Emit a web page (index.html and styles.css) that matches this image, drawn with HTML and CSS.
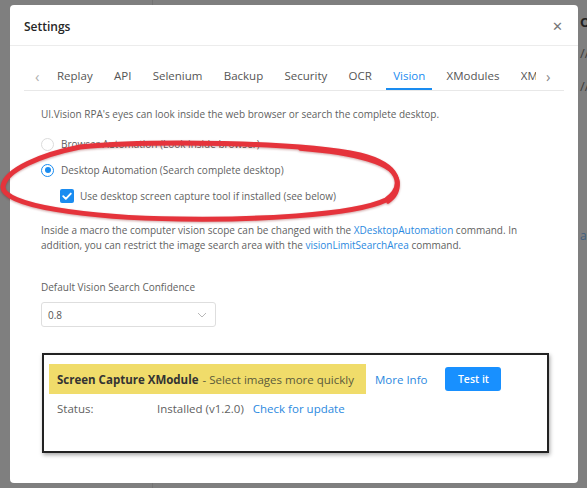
FILE: index.html
```html
<!DOCTYPE html>
<html lang="en">
<head>
<meta charset="utf-8">
<title>Settings</title>
<link rel="stylesheet" href="styles.css">
</head>
<body>
<div class="page">
  <aside class="page-side"></aside>
  <main class="page-main">
    <div class="page-title">Op</div>
    <div class="page-line">//</div>
    <div class="page-line">//</div>
    <div class="page-link">ar</div>
  </main>
</div>

<div class="modal">
  <header class="modal-head">
    <span class="modal-title">Settings</span>
    <span class="modal-close">&#x2715;</span>
  </header>
  <div class="modal-body">
    <nav class="tabs">
      <span class="tab-arrow">&#x2039;</span>
      <span class="tab">Replay</span>
      <span class="tab">API</span>
      <span class="tab">Selenium</span>
      <span class="tab">Backup</span>
      <span class="tab">Security</span>
      <span class="tab">OCR</span>
      <span class="tab active">Vision</span>
      <span class="tab">XModules</span>
      <span class="tab tab-cut">XM</span>
      <span class="tab-arrow tab-next">&#x203A;</span>
    </nav>

    <section class="pane">
      <p class="intro">UI.Vision RPA's eyes can look inside the web browser or search the complete desktop.</p>

      <label class="option"><span class="radio"></span>Browser Automation (Look inside browser)</label>
      <label class="option"><span class="radio checked"></span>Desktop Automation (Search complete desktop)</label>
      <label class="option sub"><span class="checkbox"><svg viewBox="0 0 14 14" width="14" height="14"><path d="M3.2 7.2l2.6 2.6 5-5.2" fill="none" stroke="#fff" stroke-width="1.9" stroke-linecap="round" stroke-linejoin="round"/></svg></span>Use desktop screen capture tool if installed (see below)</label>

      <p class="note">Inside a macro the computer vision scope can be changed with the <a>XDesktopAutomation</a> command. In addition, you can restrict the image search area with the <a>visionLimitSearchArea</a> command.</p>

      <div class="field-label">Default Vision Search Confidence</div>
      <div class="select"><span>0.8</span><svg viewBox="0 0 10 6" width="10" height="6"><path d="M1 1l4 4 4-4" fill="none" stroke="#b8b8b8" stroke-width="1"/></svg></div>

      <div class="xmodule">
        <div class="xm-row">
          <span class="xm-name"><b>Screen Capture XModule</b> - Select images more quickly</span>
          <a class="xm-info">More Info</a>
          <button class="xm-test">Test it</button>
        </div>
        <div class="xm-status">
          <span class="xm-key">Status:</span>
          <span class="xm-val">Installed (v1.2.0)</span>
          <a>Check for update</a>
        </div>
      </div>
    </section>
  </div>

  <svg class="annotation" width="420" height="240" viewBox="0 0 420 240">
    <path d="M80 147 C 150 140, 300 142, 360 155 C 400 165, 406 186, 386 200 C 352 216, 250 220, 180 219 C 90 218, 0 206, 3 186 C 6 170, 40 155, 80 147 Z" fill="none" stroke="#e5333b" stroke-width="5" stroke-linejoin="round"/>
    <path d="M300 149 C 352 153, 396 163, 398 182 C 399 192, 394 198, 388 202" fill="none" stroke="#e5333b" stroke-width="3.5" stroke-linecap="round"/>
  </svg>
</div>
</body>
</html>
```
FILE: styles.css
```css
* { box-sizing: border-box; }

html, body {
  margin: 0;
  height: 100%;
  overflow: hidden;
}

body {
  background: #7f7f7f;
  font-family: "Open Sans", "Noto Sans", sans-serif;
  position: relative;
}

/* dimmed application page behind the dialog */
.page {
  display: flex;
  height: 100%;
}

.page-side {
  width: 153px;
  flex: none;
  border-right: 1px solid #737373;
}

.page-main {
  flex: 1;
  padding: 13px 0 0 427px;
  color: #333;
  font-size: 13px;
  line-height: 18px;
  white-space: nowrap;
}

.page-title { font-weight: 700; color: #222; }
.page-line { margin-top: 13px; color: #3a3a3a; }
.page-line + .page-line { margin-top: 15px; }
.page-link { margin-top: 132px; color: #3f5f7f; font-size: 12px; }

/* dialog */
.modal {
  position: absolute;
  left: 10px;
  top: 5px;
  width: 568px;
  height: 478px;
  background: #fff;
  border-radius: 4px;
}

.modal-head {
  height: 41px;
  padding: 2px 14px 0;
  display: flex;
  align-items: center;
  justify-content: space-between;
  border-bottom: 1px solid #ececec;
}

.modal-title {
  font-size: 12px;
  font-weight: 600;
  color: #262626;
}

.modal-close {
  font-size: 13px;
  color: #777;
  margin-right: 1px;
  font-family: "DejaVu Sans", sans-serif;
}

.modal-body {
  padding: 15px 14px 0;
}

.tabs {
  display: flex;
  align-items: flex-end;
  height: 30px;
  border-bottom: 1px solid #e8e8e8;
  font-size: 11.5px;
  color: #555;
  white-space: nowrap;
}

.tab-arrow {
  width: 33px;
  padding: 0 0 7px 11px;
  color: #b0b0b0;
  font-size: 15px;
  line-height: 14px;
}

.tab-next {
  width: 28px;
  margin-left: auto;
  padding-left: 10px;
  color: #888;
}

.tab {
  padding: 0 0 6px;
  margin-right: 21.3px;
  line-height: 16px;
}

.tab.active {
  color: #1a8cf0;
  border-bottom: 2px solid #1a8cf0;
  padding: 0 7px 4px;
  margin: 0 14.3px 0 -7px;
}

.tab-cut {
  width: 15px;
  overflow: hidden;
  margin-right: 0;
}

.pane {
  padding: 16px 0 0 17px;
  font-size: 10px;
  color: #5f5f5f;
}

.intro { margin: 0 0 16px; line-height: 14px; }

.option {
  display: flex;
  align-items: center;
  height: 14px;
  margin-bottom: 12px;
}

.option.sub { padding-left: 19px; margin-bottom: 0; }

.radio {
  width: 13px;
  height: 13px;
  border: 1px solid #dcdcdc;
  border-radius: 50%;
  margin: 0 7px 0 0;
  display: inline-flex;
  align-items: center;
  justify-content: center;
}

.radio.checked { border-color: #1a8cf0; }
.radio.checked::after {
  content: "";
  width: 6px;
  height: 6px;
  border-radius: 50%;
  background: #1a8cf0;
}

.checkbox {
  width: 14px;
  height: 14px;
  background: #1a8cf0;
  border-radius: 2px;
  margin-right: 6px;
  display: inline-flex;
}

.note {
  margin: 20px 0 0;
  line-height: 15px;
  padding-right: 18px;
}

a { color: #2b89e0; }

.field-label { margin-top: 27px; }

.select {
  margin-top: 8px;
  width: 175px;
  height: 25px;
  border: 1px solid #dedede;
  border-radius: 3px;
  display: flex;
  align-items: center;
  justify-content: space-between;
  padding: 0 8px 0 6px;
  color: #555;
}

.xmodule {
  margin: 26px 0 0 1px;
  width: 507px;
  height: 100px;
  border: 2px solid #222;
  box-shadow: 1px 2px 4px rgba(0, 0, 0, 0.35);
  padding: 9px 5px 0;
}

.xm-row {
  display: flex;
  align-items: center;
}

.xm-name {
  background: #f0dc6a;
  width: 317px;
  height: 30px;
  display: flex;
  align-items: center;
  padding: 0 8px;
  font-size: 11.5px;
  color: #5a5a3a;
  white-space: nowrap;
}

.xm-name b { color: #333; font-weight: 700; margin-right: 4px; }

.xm-info { margin-left: 9px; font-size: 11.5px; }

.xm-test {
  margin-left: 18px;
  width: 56px;
  height: 24px;
  border: 0;
  border-radius: 3px;
  background: #1890ff;
  color: #fff;
  font: 600 10.5px "Open Sans", sans-serif;
}

.xm-status {
  display: flex;
  margin-top: 7px;
  padding-left: 8px;
  font-size: 11.5px;
}

.xm-key { width: 100px; }
.xm-val { margin-right: 9px; }

.annotation {
  position: absolute;
  left: -10px;
  top: -5px;
  overflow: visible;
  filter: drop-shadow(0 1px 1px rgba(120, 0, 0, 0.35));
}
```
